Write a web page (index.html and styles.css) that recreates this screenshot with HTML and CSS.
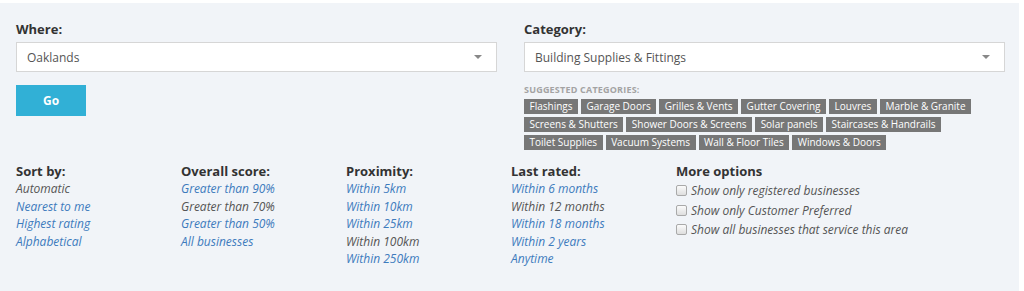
FILE: index.html
```html
<!DOCTYPE html>
<html>
<head>
<meta charset="utf-8">
<link rel="stylesheet" href="styles.css">
</head>
<body>
<div class="panel">
  <div class="top">
    <div class="field">
      <div class="label">Where:</div>
      <div class="select"><span>Oaklands</span><span class="arrow"></span></div>
      <button class="go">Go</button>
    </div>
    <div class="field">
      <div class="label">Category:</div>
      <div class="select"><span>Building Supplies &amp; Fittings</span><span class="arrow"></span></div>
      <div class="suggest">Suggested categories:</div>
      <div class="tags">
        <span class="tag">Flashings</span>
        <span class="tag">Garage Doors</span>
        <span class="tag">Grilles &amp; Vents</span>
        <span class="tag">Gutter Covering</span>
        <span class="tag">Louvres</span>
        <span class="tag">Marble &amp; Granite</span>
        <span class="tag">Screens &amp; Shutters</span>
        <span class="tag">Shower Doors &amp; Screens</span>
        <span class="tag">Solar panels</span>
        <span class="tag">Staircases &amp; Handrails</span>
        <span class="tag">Toilet Supplies</span>
        <span class="tag">Vacuum Systems</span>
        <span class="tag">Wall &amp; Floor Tiles</span>
        <span class="tag">Windows &amp; Doors</span>
      </div>
    </div>
  </div>
  <div class="bottom">
    <div class="col">
      <div class="head">Sort by:</div>
      <div class="item">Automatic</div>
      <a class="item link">Nearest to me</a>
      <a class="item link">Highest rating</a>
      <a class="item link">Alphabetical</a>
    </div>
    <div class="col">
      <div class="head">Overall score:</div>
      <a class="item link">Greater than 90%</a>
      <div class="item">Greater than 70%</div>
      <a class="item link">Greater than 50%</a>
      <a class="item link">All businesses</a>
    </div>
    <div class="col">
      <div class="head">Proximity:</div>
      <a class="item link">Within 5km</a>
      <a class="item link">Within 10km</a>
      <a class="item link">Within 25km</a>
      <div class="item">Within 100km</div>
      <a class="item link">Within 250km</a>
    </div>
    <div class="col">
      <div class="head">Last rated:</div>
      <a class="item link">Within 6 months</a>
      <div class="item">Within 12 months</div>
      <a class="item link">Within 18 months</a>
      <a class="item link">Within 2 years</a>
      <a class="item link">Anytime</a>
    </div>
    <div class="col">
      <div class="head">More options</div>
      <div class="opts">
        <label class="opt"><span class="box"></span>Show only registered businesses</label>
        <label class="opt"><span class="box"></span>Show only Customer Preferred</label>
        <label class="opt"><span class="box"></span>Show all businesses that service this area</label>
      </div>
    </div>
  </div>
</div>
</body>
</html>
```
FILE: styles.css
```css
html, body {
  margin: 0;
  padding: 0;
  background: #ffffff;
  font-family: "Open Sans", "Liberation Sans", sans-serif;
}
.panel {
  margin-top: 3px;
  width: 1019px;
  height: 288px;
  box-sizing: border-box;
  padding: 17px 14px 0 16px;
  background: #f1f4f8;
}
.top {
  display: grid;
  grid-template-columns: 481px 481px;
  column-gap: 27px;
  align-items: start;
}
.label {
  font-size: 13px;
  font-weight: 700;
  line-height: 18px;
  color: #333;
  margin-bottom: 4px;
}
.select {
  height: 30px;
  box-sizing: border-box;
  border: 1px solid #d6d6d6;
  background: #fff;
  padding: 0 14px 0 10px;
  display: flex;
  align-items: center;
  justify-content: space-between;
  font-size: 12px;
  color: #555;
}
.arrow {
  width: 0;
  height: 0;
  border-left: 4px solid transparent;
  border-right: 4px solid transparent;
  border-top: 4px solid #888;
}
.go {
  display: block;
  margin-top: 13px;
  width: 70px;
  height: 31px;
  border: 0;
  background: #31b0d6;
  color: #fff;
  font-family: "Open Sans", "Liberation Sans", sans-serif;
  font-weight: 700;
  font-size: 12px;
  padding: 0;
}
.suggest {
  margin-top: 12px;
  font-size: 9px;
  line-height: 12px;
  font-weight: 700;
  text-transform: uppercase;
  color: #a3a3a3;
  letter-spacing: 0.2px;
}
.tags {
  margin-top: 3px;
  display: flex;
  flex-wrap: wrap;
  gap: 3px 3px;
}
.tag {
  height: 15px;
  line-height: 15px;
  padding: 0 5.5px;
  font-size: 10px;
  background: #777;
  color: #fff;
  white-space: nowrap;
}
.bottom {
  margin-top: 13px;
  display: grid;
  grid-template-columns: 165px 165px 165px 165px auto;
}
.col {
  display: flex;
  flex-direction: column;
  align-items: flex-start;
}
.head {
  font-size: 13px;
  font-weight: 700;
  line-height: 17px;
  color: #333;
}
.item {
  font-size: 12px;
  font-style: italic;
  line-height: 17.5px;
  color: #555;
  text-decoration: none;
}
.link {
  color: #3d7bbd;
  cursor: pointer;
}
.opts {
  margin-top: 1px;
}
.opt {
  display: flex;
  align-items: center;
  font-size: 12px;
  font-style: italic;
  line-height: 19.5px;
  color: #555;
}
.box {
  width: 11px;
  height: 11px;
  box-sizing: border-box;
  border: 1px solid #a9a9a9;
  border-radius: 2px;
  background: linear-gradient(#fbfbfb, #dedede);
  margin-right: 4px;
  flex: none;
}
```
